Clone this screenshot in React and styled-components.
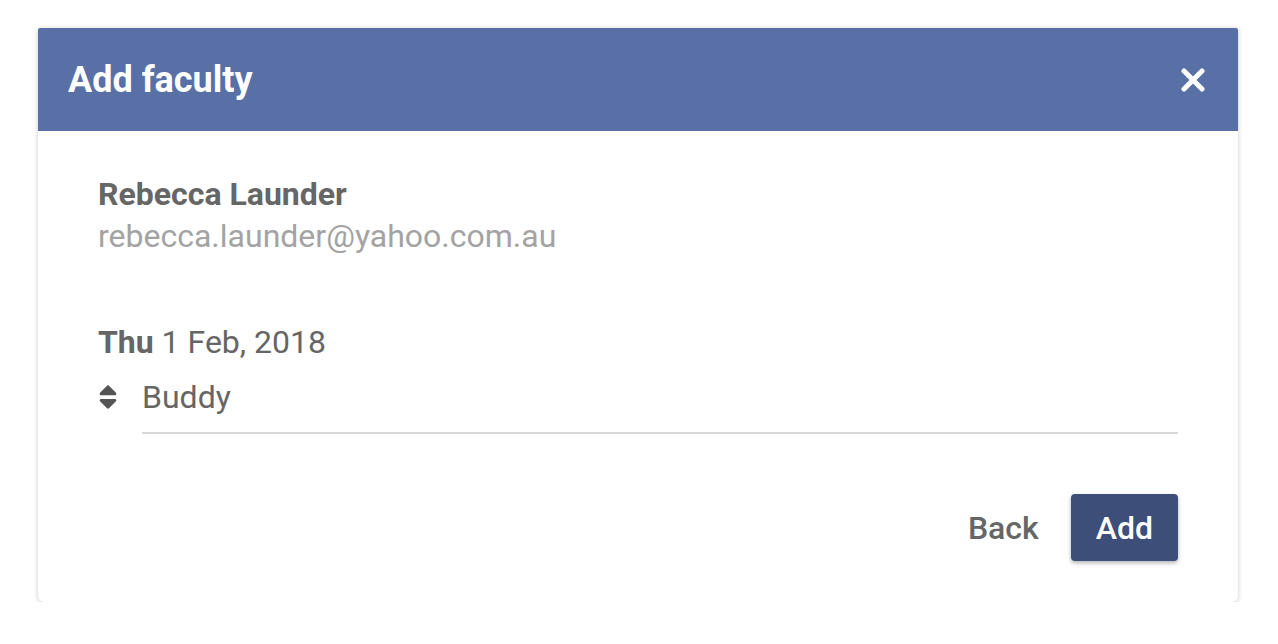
import React from "react";
import styled, { createGlobalStyle } from "styled-components";
import { FaSort } from "react-icons/fa";

const GlobalStyle = createGlobalStyle`
  html, body {
    margin: 0;
    padding: 0;
    background: #ffffff;
    font-family: Roboto, "Liberation Sans", sans-serif;
  }
`;

const Page = styled.div`
  padding: 28px 40px 0 38px;
`;

const Dialog = styled.div`
  width: 1200px;
  background: #fff;
  border-radius: 2px 2px 6px 6px;
  box-shadow: 0 1px 5px rgba(0, 0, 0, 0.22);
  overflow: hidden;
`;

const Header = styled.div`
  height: 103px;
  background: #5870a6;
  display: flex;
  align-items: center;
  justify-content: space-between;
  padding: 0 33px 0 30px;
  box-sizing: border-box;
`;

const Title = styled.h2`
  margin: 0;
  color: #fff;
  font-size: 36px;
  font-weight: 700;
`;

const CloseButton = styled.button`
  border: none;
  background: none;
  padding: 0;
  width: 24px;
  height: 24px;
  cursor: pointer;
  display: flex;
`;

const Body = styled.div`
  padding: 43px 60px 41px 60px;
`;

const Name = styled.div`
  font-size: 32px;
  font-weight: 700;
  color: #666;
  line-height: 40px;
`;

const Email = styled.div`
  font-size: 32px;
  color: #a3a3a3;
  line-height: 40px;
  margin-top: 2px;
`;

const DateLine = styled.div`
  margin-top: 66px;
  font-size: 32px;
  color: #666;
  line-height: 40px;

  b {
    font-weight: 700;
  }
`;

const SelectRow = styled.div`
  display: flex;
  align-items: flex-start;
  margin-top: 15px;
`;

const SortIcon = styled.span`
  width: 49px;
  display: flex;
  color: #555;
  font-size: 30px;
  margin: 5px 0 0 -5px;
`;

const Field = styled.div`
  flex: 1;
  font-size: 32px;
  color: #666;
  line-height: 40px;
  padding-bottom: 15px;
  border-bottom: 2px solid #d8d8d8;
`;

const Actions = styled.div`
  display: flex;
  justify-content: flex-end;
  align-items: center;
  gap: 16px;
  margin-top: 60px;
`;

const Button = styled.button`
  font-family: Roboto, "Liberation Sans", sans-serif;
  font-size: 32px;
  font-weight: 500;
  height: 67px;
  padding: 0 ${({ primary }) => (primary ? "25px" : "16px")};
  border: none;
  border-radius: 4px;
  cursor: pointer;
  color: ${({ primary }) => (primary ? "#fff" : "#666")};
  background: ${({ primary }) => (primary ? "#3d4e78" : "transparent")};
  box-shadow: ${({ primary }) =>
    primary ? "0 2px 4px rgba(0, 0, 0, 0.3)" : "none"};
`;

const App = () => (
  <>
    <GlobalStyle />
    <Page>
      <Dialog>
        <Header>
          <Title>Add faculty</Title>
          <CloseButton aria-label="Close">
            <svg width="24" height="24" viewBox="0 0 24 24">
              <path
                d="M3 3 L21 21 M21 3 L3 21"
                stroke="#fff"
                strokeWidth="5"
                strokeLinecap="round"
              />
            </svg>
          </CloseButton>
        </Header>
        <Body>
          <Name>Rebecca Launder</Name>
          <Email>rebecca.launder@yahoo.com.au</Email>
          <DateLine>
            <b>Thu</b> 1 Feb, 2018
          </DateLine>
          <SelectRow>
            <SortIcon>
              <FaSort />
            </SortIcon>
            <Field>Buddy</Field>
          </SelectRow>
          <Actions>
            <Button>Back</Button>
            <Button primary>Add</Button>
          </Actions>
        </Body>
      </Dialog>
    </Page>
  </>
);

export default App;
